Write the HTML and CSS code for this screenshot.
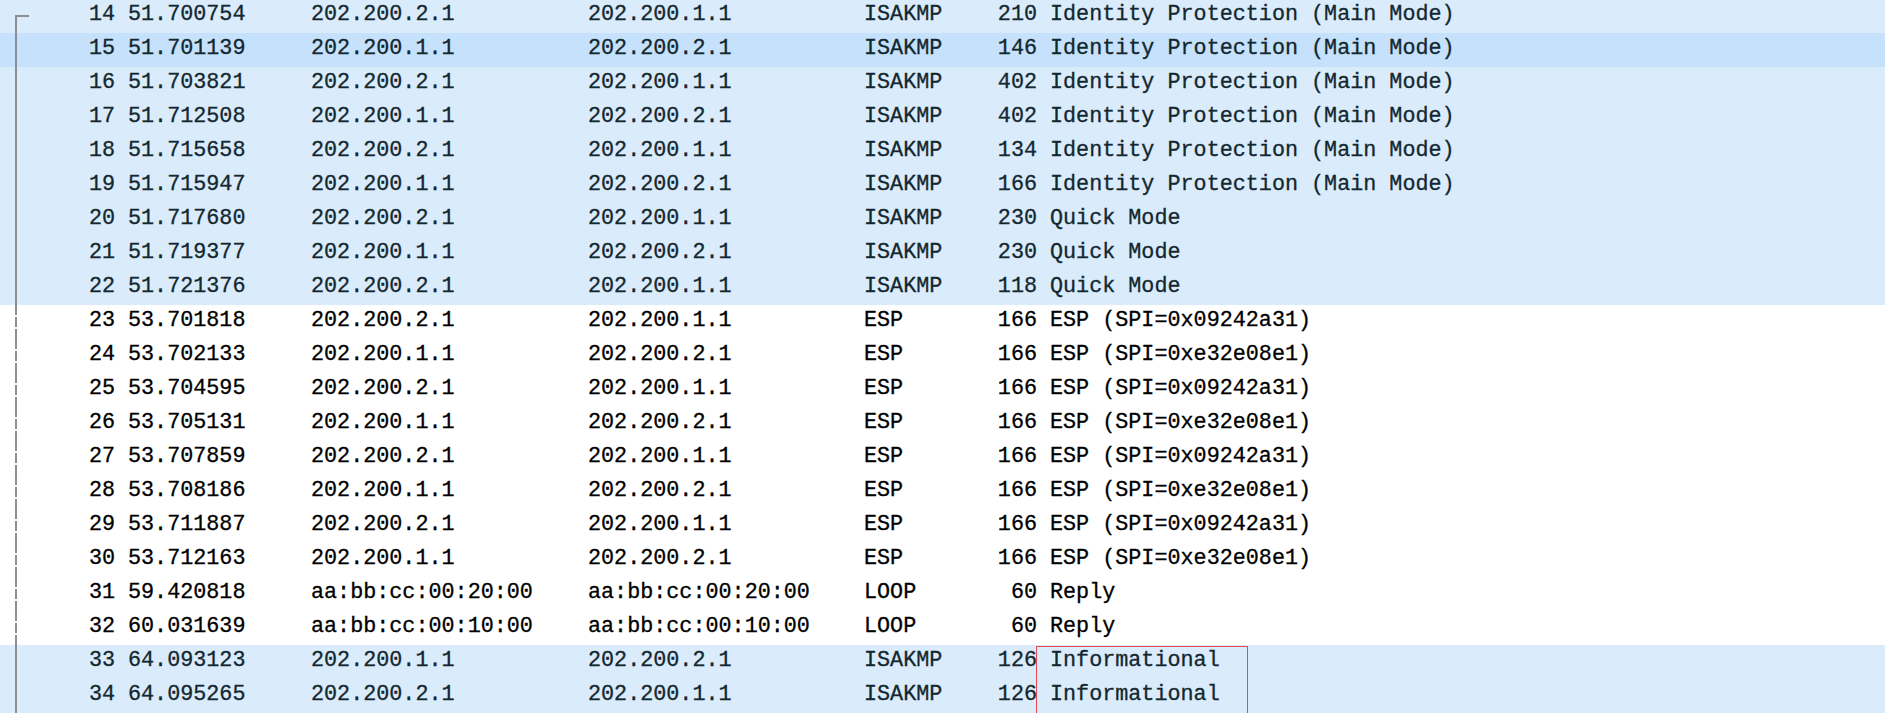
FILE: index.html
```html
<!DOCTYPE html>
<html lang="en">
<head>
<meta charset="utf-8">
<title>Packet list</title>
<link rel="stylesheet" href="styles.css">
</head>
<body>
<div class="list">
  <div class="row udp first"><span class="no">14</span><span class="time">51.700754</span><span>202.200.2.1</span><span>202.200.1.1</span><span>ISAKMP</span><span class="len">210</span><span class="info">Identity Protection (Main Mode)</span></div>
  <div class="row udp sel"><span class="no">15</span><span class="time">51.701139</span><span>202.200.1.1</span><span>202.200.2.1</span><span>ISAKMP</span><span class="len">146</span><span class="info">Identity Protection (Main Mode)</span></div>
  <div class="row udp"><span class="no">16</span><span class="time">51.703821</span><span>202.200.2.1</span><span>202.200.1.1</span><span>ISAKMP</span><span class="len">402</span><span class="info">Identity Protection (Main Mode)</span></div>
  <div class="row udp"><span class="no">17</span><span class="time">51.712508</span><span>202.200.1.1</span><span>202.200.2.1</span><span>ISAKMP</span><span class="len">402</span><span class="info">Identity Protection (Main Mode)</span></div>
  <div class="row udp"><span class="no">18</span><span class="time">51.715658</span><span>202.200.2.1</span><span>202.200.1.1</span><span>ISAKMP</span><span class="len">134</span><span class="info">Identity Protection (Main Mode)</span></div>
  <div class="row udp"><span class="no">19</span><span class="time">51.715947</span><span>202.200.1.1</span><span>202.200.2.1</span><span>ISAKMP</span><span class="len">166</span><span class="info">Identity Protection (Main Mode)</span></div>
  <div class="row udp"><span class="no">20</span><span class="time">51.717680</span><span>202.200.2.1</span><span>202.200.1.1</span><span>ISAKMP</span><span class="len">230</span><span class="info">Quick Mode</span></div>
  <div class="row udp"><span class="no">21</span><span class="time">51.719377</span><span>202.200.1.1</span><span>202.200.2.1</span><span>ISAKMP</span><span class="len">230</span><span class="info">Quick Mode</span></div>
  <div class="row udp"><span class="no">22</span><span class="time">51.721376</span><span>202.200.2.1</span><span>202.200.1.1</span><span>ISAKMP</span><span class="len">118</span><span class="info">Quick Mode</span></div>
  <div class="row plain"><span class="no">23</span><span class="time">53.701818</span><span>202.200.2.1</span><span>202.200.1.1</span><span>ESP</span><span class="len">166</span><span class="info">ESP (SPI=0x09242a31)</span></div>
  <div class="row plain"><span class="no">24</span><span class="time">53.702133</span><span>202.200.1.1</span><span>202.200.2.1</span><span>ESP</span><span class="len">166</span><span class="info">ESP (SPI=0xe32e08e1)</span></div>
  <div class="row plain"><span class="no">25</span><span class="time">53.704595</span><span>202.200.2.1</span><span>202.200.1.1</span><span>ESP</span><span class="len">166</span><span class="info">ESP (SPI=0x09242a31)</span></div>
  <div class="row plain"><span class="no">26</span><span class="time">53.705131</span><span>202.200.1.1</span><span>202.200.2.1</span><span>ESP</span><span class="len">166</span><span class="info">ESP (SPI=0xe32e08e1)</span></div>
  <div class="row plain"><span class="no">27</span><span class="time">53.707859</span><span>202.200.2.1</span><span>202.200.1.1</span><span>ESP</span><span class="len">166</span><span class="info">ESP (SPI=0x09242a31)</span></div>
  <div class="row plain"><span class="no">28</span><span class="time">53.708186</span><span>202.200.1.1</span><span>202.200.2.1</span><span>ESP</span><span class="len">166</span><span class="info">ESP (SPI=0xe32e08e1)</span></div>
  <div class="row plain"><span class="no">29</span><span class="time">53.711887</span><span>202.200.2.1</span><span>202.200.1.1</span><span>ESP</span><span class="len">166</span><span class="info">ESP (SPI=0x09242a31)</span></div>
  <div class="row plain"><span class="no">30</span><span class="time">53.712163</span><span>202.200.1.1</span><span>202.200.2.1</span><span>ESP</span><span class="len">166</span><span class="info">ESP (SPI=0xe32e08e1)</span></div>
  <div class="row plain"><span class="no">31</span><span class="time">59.420818</span><span>aa:bb:cc:00:20:00</span><span>aa:bb:cc:00:20:00</span><span>LOOP</span><span class="len">60</span><span class="info">Reply</span></div>
  <div class="row plain"><span class="no">32</span><span class="time">60.031639</span><span>aa:bb:cc:00:10:00</span><span>aa:bb:cc:00:10:00</span><span>LOOP</span><span class="len">60</span><span class="info">Reply</span></div>
  <div class="row udp"><span class="no">33</span><span class="time">64.093123</span><span>202.200.1.1</span><span>202.200.2.1</span><span>ISAKMP</span><span class="len">126</span><span class="info">Informational</span></div>
  <div class="row udp"><span class="no">34</span><span class="time">64.095265</span><span>202.200.2.1</span><span>202.200.1.1</span><span>ISAKMP</span><span class="len">126</span><span class="info">Informational</span></div>
  <div class="mark"></div>
</div>
</body>
</html>
```

FILE: styles.css
```css
html, body {
  margin: 0;
  padding: 0;
  background: #ffffff;
  overflow: hidden;
}

.list {
  position: relative;
  margin-top: -1px;
  font-family: "Liberation Mono", "DejaVu Sans Mono", monospace;
  font-size: 21.75px;
  -webkit-text-stroke: 0.3px currentColor;
}

.row {
  position: relative;
  display: grid;
  grid-template-columns: 115px 196px 277px 276px 111px 62px 1fr;
  height: 34px;
  line-height: 31px;
  white-space: nowrap;
}

.row.udp {
  background: #daebfc;
  color: #12272e;
}

.row.udp.sel {
  background: #c5e1fb;
}

.row.plain {
  background: #ffffff;
  color: #000000;
}

.no, .len {
  text-align: right;
}

.time {
  padding-left: 13px;
}

.info {
  padding-left: 13px;
}

/* related-packet indicator */
.row::before {
  content: "";
  position: absolute;
  left: 15px;
  top: 0;
  width: 2px;
  height: 100%;
  background: #8a9096;
}

.row.plain::before {
  background: repeating-linear-gradient(to bottom, #8a9096 0 10px, transparent 10px 12px);
}

.row.first::before {
  top: 16px;
  height: 18px;
}

.row.first::after {
  content: "";
  position: absolute;
  left: 15px;
  top: 16px;
  width: 14px;
  height: 2px;
  background: #8a9096;
}

.mark {
  position: absolute;
  left: 1036px;
  top: 647px;
  width: 210px;
  height: 90px;
  border: 1px solid #e5484d;
}
```
